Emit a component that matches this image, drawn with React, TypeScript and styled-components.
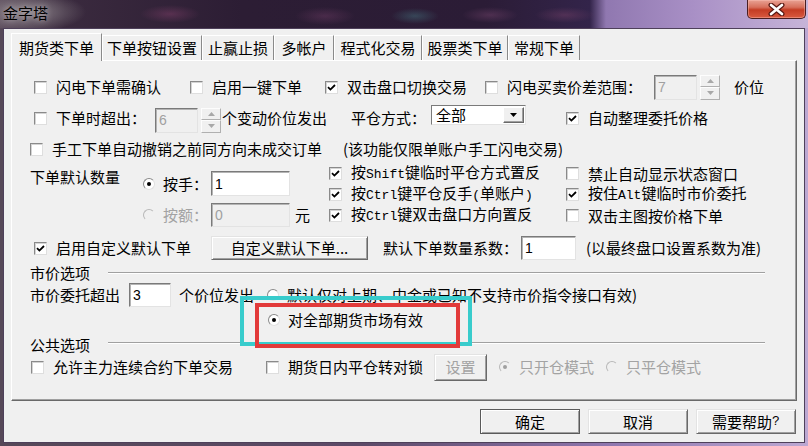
import React from "react";
import styled, { createGlobalStyle } from "styled-components";

const GlobalStyle = createGlobalStyle`
  html, body {
    margin: 0;
    padding: 0;
    background: #f0f0f0;
  }
  body {
    font-family: "Noto Sans CJK SC", "Liberation Sans", sans-serif;
    font-size: 15px;
    line-height: 20px;
    color: #000;
  }
`;

const Window = styled.div`
  position: relative;
  width: 808px;
  height: 446px;
  display: flex;
  flex-direction: column;
  overflow: hidden;
  background: linear-gradient(90deg, #564858 0%, #5d4a68 45%, #8f76ae 75%, #bca8d2 100%);
`;

const TitleBar = styled.div`
  flex: none;
  height: 28px;
  display: flex;
  align-items: flex-start;
  justify-content: space-between;
  background:
    radial-gradient(ellipse 60px 20px at 26px 12px, rgba(140, 132, 138, 0.95), rgba(140, 132, 138, 0) 100%),
    radial-gradient(ellipse 30px 9px at 170px 14px, rgba(120, 60, 100, 0.55), rgba(120, 60, 100, 0) 100%),
    radial-gradient(ellipse 30px 9px at 325px 16px, rgba(110, 60, 100, 0.45), rgba(110, 60, 100, 0) 100%),
    radial-gradient(ellipse 24px 8px at 415px 16px, rgba(70, 120, 130, 0.45), rgba(70, 120, 130, 0) 100%),
    radial-gradient(ellipse 28px 8px at 490px 15px, rgba(120, 70, 110, 0.45), rgba(120, 70, 110, 0) 100%),
    radial-gradient(ellipse 30px 8px at 565px 15px, rgba(130, 70, 110, 0.4), rgba(130, 70, 110, 0) 100%),
    linear-gradient(90deg, #5c4c5c 0%, #3a2a3e 8%, #2c1d34 30%, #2b1c36 60%, #33244a 73%, #9078b0 75%, #a990c6 86%, #c6b4d8 100%);
`;

const Title = styled.div`
  padding: 4px 0 0 3px;
  font-size: 15px;
  line-height: 18px;
  color: #000;
  text-shadow: 0 0 6px rgba(230, 225, 230, 0.7);
`;

const CloseButton = styled.div`
  width: 59px;
  height: 19px;
  margin-right: 2px;
  box-sizing: border-box;
  border: 1px solid #4a1e22;
  border-top: none;
  border-radius: 0 0 5px 5px;
  display: flex;
  align-items: center;
  justify-content: center;
  background: linear-gradient(180deg, #e9a294 0%, #d7705c 40%, #c43c24 55%, #d85a40 100%);
  box-shadow: inset 0 0 0 1px rgba(255, 200, 190, 0.4);
`;

const Client = styled.div`
  flex: 1;
  margin: 0 3px 3px;
  border: 1px solid #4e405a;
  background: #f0f0f0;
  padding: 4px 7px 0;
  display: flex;
  flex-direction: column;
`;

const TabStrip = styled.div`
  position: relative;
  z-index: 1;
  height: 27px;
  display: flex;
  align-items: flex-end;
`;

const Tab = styled.div<{ $w: number; $active?: boolean }>`
  flex: none;
  width: ${(p) => p.$w}px;
  height: ${(p) => (p.$active ? 28 : 25)}px;
  margin-bottom: ${(p) => (p.$active ? -1 : 0)}px;
  box-sizing: border-box;
  display: flex;
  align-items: center;
  justify-content: center;
  background: #f0f0f0;
  border: 1px solid;
  border-bottom: none;
  border-color: #ffffff #8a8a8a transparent #ffffff;
  white-space: nowrap;
`;

const Panel = styled.div`
  position: relative;
  flex: none;
  height: 341px;
  box-sizing: border-box;
  border: 1px solid;
  border-color: #ffffff #696969 #696969 #ffffff;
  box-shadow: inset -1px -1px 0 #a0a0a0;
  padding-top: 11px;
  display: flex;
  flex-direction: column;
`;

const Row = styled.div<{ $h: number; $pl: number }>`
  flex: none;
  height: ${(p) => p.$h}px;
  padding-left: ${(p) => p.$pl}px;
  display: flex;
  align-items: center;
  white-space: nowrap;
`;

const Block = styled.div`
  flex: none;
  height: 70px;
  padding-left: 18px;
  display: flex;
  align-items: flex-start;
  white-space: nowrap;
`;

const Cell = styled.div<{ $w: number; $ml?: number }>`
  flex: none;
  width: ${(p) => p.$w}px;
  margin-left: ${(p) => p.$ml || 0}px;
  display: flex;
  align-items: center;
`;

const Text = styled.span<{ $ml?: number; $disabled?: boolean }>`
  margin-left: ${(p) => p.$ml || 0}px;
  color: ${(p) => (p.$disabled ? "#a3a3a3" : "#000")};
`;

const QtyLabel = styled.div`
  flex: none;
  width: 113px;
  margin-top: 3px;
`;

const RadioCol = styled.div`
  flex: none;
  width: 186px;
  padding-top: 7px;
  display: flex;
  flex-direction: column;
  gap: 6px;
`;

const SubRow = styled.div`
  height: 25px;
  display: flex;
  align-items: center;
`;

const CheckCol = styled.div<{ $w?: number }>`
  flex: none;
  width: ${(p) => (p.$w ? `${p.$w}px` : "auto")};
  margin-top: -1px;
  display: flex;
  flex-direction: column;
`;

const CheckLine = styled.div`
  height: 21px;
  display: flex;
  align-items: center;
`;

const Mono = styled.span`
  font-family: "Liberation Mono", "DejaVu Sans Mono", monospace;
  font-size: 13px;
`;

const ChoiceLabel = styled.span<{ $gap: number; $disabled?: boolean }>`
  display: inline-flex;
  align-items: center;
  gap: ${(p) => p.$gap}px;
  color: ${(p) => (p.$disabled ? "#a3a3a3" : "#000")};
`;

const Box = styled.span`
  flex: none;
  width: 13px;
  height: 13px;
  box-sizing: border-box;
  background: #fff;
  border: 1px solid;
  border-color: #8a8a8a #dedede #dedede #8a8a8a;
  box-shadow: inset 1px 1px 0 #d4d4d4;
  display: flex;
  align-items: center;
  justify-content: center;
`;

const Round = styled.span<{ $on?: boolean; $disabled?: boolean }>`
  flex: none;
  width: 12px;
  height: 12px;
  box-sizing: border-box;
  border-radius: 50%;
  background: ${(p) => (p.$disabled ? "#f0f0f0" : "#fff")};
  border: 1px solid;
  border-color: ${(p) => (p.$disabled ? "#b8b8b8 #f0f0f0 #f0f0f0 #b8b8b8" : "#8a8a8a #e0e0e0 #e0e0e0 #8a8a8a")};
  display: flex;
  align-items: center;
  justify-content: center;

  &::after {
    content: "";
    display: ${(p) => (p.$on ? "block" : "none")};
    width: 4px;
    height: 4px;
    border-radius: 50%;
    background: ${(p) => (p.$disabled ? "#a0a0a0" : "#000")};
  }
`;

const Field = styled.div<{ $w: number; $h?: number; $disabled?: boolean }>`
  flex: none;
  width: ${(p) => p.$w}px;
  height: ${(p) => p.$h || 24}px;
  box-sizing: border-box;
  padding-left: 3px;
  display: flex;
  align-items: center;
  background: ${(p) => (p.$disabled ? "#f0f0f0" : "#fff")};
  color: ${(p) => (p.$disabled ? "#a0a0a0" : "#000")};
  border: 1px solid;
  border-color: #7a7a7a #e3e3e3 #e3e3e3 #7a7a7a;
  box-shadow: inset 1px 1px 0 #b4b4b4;
  font-family: "Liberation Sans", sans-serif;
  font-size: 14px;
`;

const SpinBox = styled.div<{ $mt?: number }>`
  flex: none;
  display: flex;
  align-items: center;
  gap: 3px;
  margin-top: ${(p) => p.$mt || 0}px;
`;

const SpinButtons = styled.div`
  width: 20px;
  height: 25px;
  display: flex;
  flex-direction: column;
`;

const SpinHalf = styled.div`
  flex: 1;
  box-sizing: border-box;
  border: 1px solid;
  border-color: #fdfdfd #b0b0b0 #b0b0b0 #fdfdfd;
  background: #f0f0f0;
  display: flex;
  align-items: center;
  justify-content: center;
`;

const Combo = styled.div`
  flex: none;
  width: 95px;
  height: 20px;
  margin-bottom: 6px;
  box-sizing: border-box;
  padding: 0 1px 0 4px;
  display: flex;
  align-items: center;
  justify-content: space-between;
  background: #fff;
  border: 1px solid;
  border-color: #7a7a7a #e3e3e3 #e3e3e3 #7a7a7a;
`;

const ComboArrow = styled.div`
  width: 21px;
  height: 16px;
  box-sizing: border-box;
  border: 1px solid;
  border-color: #fff #696969 #696969 #fff;
  box-shadow: inset -1px -1px 0 #a0a0a0;
  background: #f0f0f0;
  display: flex;
  align-items: center;
  justify-content: center;
`;

const Button = styled.div<{ $w: number; $h?: number; $ml?: number; $disabled?: boolean; $default?: boolean }>`
  flex: none;
  width: ${(p) => p.$w}px;
  height: ${(p) => p.$h || 25}px;
  margin-left: ${(p) => p.$ml || 0}px;
  box-sizing: border-box;
  display: flex;
  align-items: center;
  justify-content: center;
  background: #f0f0f0;
  color: ${(p) => (p.$disabled ? "#a3a3a3" : "#000")};
  border: 1px solid;
  border-color: ${(p) => (p.$default ? "#5a5a5a" : "#e3e3e3 #696969 #696969 #e3e3e3")};
  box-shadow: inset 1px 1px 0 #fff, inset -1px -1px 0 #a0a0a0;
`;

const GroupRow = styled.div`
  flex: none;
  height: 22px;
  padding: 0 31px 0 18px;
  display: flex;
  align-items: center;
`;

const GroupTitle = styled.span`
  flex: none;
  width: 78px;
`;

const Rule = styled.div<{ $dy?: number }>`
  flex: 1;
  height: 0;
  margin-top: ${(p) => p.$dy || 0}px;
  border-top: 1px solid #a0a0a0;
  border-bottom: 1px solid #fff;
`;

const Footer = styled.div`
  display: flex;
  justify-content: flex-end;
  gap: 8px;
  padding: 8px 1px 0 0;
`;

const Highlight = styled.div<{ $x: number; $y: number; $w: number; $h: number; $color: string }>`
  position: absolute;
  left: ${(p) => p.$x}px;
  top: ${(p) => p.$y}px;
  width: ${(p) => p.$w}px;
  height: ${(p) => p.$h}px;
  box-sizing: border-box;
  border: 4px solid ${(p) => p.$color};
  pointer-events: none;
`;

const CheckMark = () => (
  <svg width="9" height="9" viewBox="0 0 9 9">
    <path d="M1 4.2 L3.4 6.6 L8 2" fill="none" stroke="#000" strokeWidth="1.8" />
  </svg>
);

const Check = ({ on, children }: { on?: boolean; children: React.ReactNode }) => (
  <ChoiceLabel $gap={9}>
    <Box>{on && <CheckMark />}</Box>
    <span>{children}</span>
  </ChoiceLabel>
);

const Radio = ({ on, disabled, children }: { on?: boolean; disabled?: boolean; children: React.ReactNode }) => (
  <ChoiceLabel $gap={8} $disabled={disabled}>
    <Round $on={on} $disabled={disabled} />
    <span>{children}</span>
  </ChoiceLabel>
);

const Triangle = ({ up, color }: { up?: boolean; color: string }) => (
  <svg width="7" height="4" viewBox="0 0 7 4">
    <path d={up ? "M0 4 L3.5 0 L7 4 Z" : "M0 0 L7 0 L3.5 4 Z"} fill={color} />
  </svg>
);

const Spin = ({ value, mt }: { value: string; mt?: number }) => (
  <SpinBox $mt={mt}>
    <Field $w={43} $h={25} $disabled>{value}</Field>
    <SpinButtons>
      <SpinHalf><Triangle up color="#a8a8a8" /></SpinHalf>
      <SpinHalf><Triangle color="#a8a8a8" /></SpinHalf>
    </SpinButtons>
  </SpinBox>
);

const tabs = [
  { label: "期货类下单", w: 91 },
  { label: "下单按钮设置", w: 100 },
  { label: "止赢止损", w: 72 },
  { label: "多帐户", w: 60 },
  { label: "程式化交易", w: 88 },
  { label: "股票类下单", w: 86 },
  { label: "常规下单", w: 72 },
];

export default function App() {
  return (
    <>
      <GlobalStyle />
      <Window>
        <TitleBar>
          <Title>金字塔</Title>
          <CloseButton>
            <svg width="17" height="13" viewBox="0 0 17 13">
              <path d="M3 2 L14 11 M14 2 L3 11" stroke="#5a1a14" strokeWidth="5" strokeLinecap="round" />
              <path d="M3 2 L14 11 M14 2 L3 11" stroke="#ffffff" strokeWidth="2.6" strokeLinecap="round" />
            </svg>
          </CloseButton>
        </TitleBar>

        <Client>
          <TabStrip>
            {tabs.map((t, i) => (
              <Tab key={t.label} $w={t.w} $active={i === 0}>
                {t.label}
              </Tab>
            ))}
          </TabStrip>

          <Panel>
            <Row $h={30} $pl={22}>
              <Cell $w={156}><Check>闪电下单需确认</Check></Cell>
              <Cell $w={135}><Check>启用一键下单</Check></Cell>
              <Cell $w={160}><Check on>双击盘口切换交易</Check></Cell>
              <Cell $w={169}><Check>闪电买卖价差范围：</Check></Cell>
              <Spin value="7" />
              <Text $ml={14}>价位</Text>
            </Row>

            <Row $h={32} $pl={22}>
              <Cell $w={121}><Check>下单时超出：</Check></Cell>
              <Spin value="6" mt={4} />
              <Cell $w={129} $ml={1}>个变动价位发出</Cell>
              <Cell $w={80}>平仓方式：</Cell>
              <Combo>
                <span>全部</span>
                <ComboArrow><Triangle color="#000" /></ComboArrow>
              </Combo>
              <Cell $w={160} $ml={40}><Check on>自动整理委托价格</Check></Cell>
            </Row>

            <Row $h={30} $pl={18}>
              <Cell $w={313}><Check>手工下单自动撤销之前同方向未成交订单</Check></Cell>
              <Text>(该功能仅限单账户手工闪电交易)</Text>
            </Row>

            <Block>
              <QtyLabel>下单默认数量</QtyLabel>
              <RadioCol>
                <SubRow>
                  <Cell $w={68}><Radio on>按手：</Radio></Cell>
                  <Field $w={79} $h={25}>1</Field>
                </SubRow>
                <SubRow>
                  <Cell $w={68}><Radio disabled>按额：</Radio></Cell>
                  <Field $w={79} $h={24} $disabled>0</Field>
                  <Text $ml={5}>元</Text>
                </SubRow>
              </RadioCol>
              <CheckCol $w={237}>
                <CheckLine><Check on>按<Mono>Shift</Mono>键临时平仓方式置反</Check></CheckLine>
                <CheckLine><Check on>按<Mono>Ctrl</Mono>键平仓反手<Mono>(</Mono>单账户<Mono>)</Mono></Check></CheckLine>
                <CheckLine><Check on>按<Mono>Ctrl</Mono>键双击盘口方向置反</Check></CheckLine>
              </CheckCol>
              <CheckCol>
                <CheckLine><Check>禁止自动显示状态窗口</Check></CheckLine>
                <CheckLine><Check on>按住<Mono>Alt</Mono>键临时市价委托</Check></CheckLine>
                <CheckLine><Check>双击主图按价格下单</Check></CheckLine>
              </CheckCol>
            </Block>

            <Row $h={28} $pl={22}>
              <Cell $w={177}><Check on>启用自定义默认下单</Check></Cell>
              <Button $w={157} $h={24}>自定义默认下单...</Button>
              <Cell $w={138} $ml={15}>默认下单数量系数：</Cell>
              <Field $w={55}>1</Field>
              <Text $ml={10}>(以最终盘口设置系数为准)</Text>
            </Row>

            <GroupRow>
              <GroupTitle>市价选项</GroupTitle>
              <Rule $dy={-1} />
            </GroupRow>

            <Row $h={22} $pl={18}>
              <Cell $w={99}>市价委托超出</Cell>
              <Field $w={42}>3</Field>
              <Cell $w={88} $ml={8}>个价位发出</Cell>
              <Radio>默认仅对上期、中金或已知不支持市价指令接口有效)</Radio>
            </Row>

            <Row $h={28} $pl={256}>
              <Radio on>对全部期货市场有效</Radio>
            </Row>

            <GroupRow>
              <GroupTitle>公共选项</GroupTitle>
              <Rule $dy={-4} />
            </GroupRow>

            <Row $h={22} $pl={19}>
              <Cell $w={235}><Check>允许主力连续合约下单交易</Check></Cell>
              <Cell $w={168}><Check>期货日内平仓转对锁</Check></Cell>
              <Button $w={53} $h={27} $disabled>设置</Button>
              <Cell $w={107} $ml={12}><Radio on disabled>只开仓模式</Radio></Cell>
              <Radio disabled>只平仓模式</Radio>
            </Row>
          </Panel>

          <Footer>
            <Button $w={100} $default>确定</Button>
            <Button $w={100}>取消</Button>
            <Button $w={100}>需要帮助<Mono>?</Mono></Button>
          </Footer>
        </Client>

        <Highlight $x={240} $y={296} $w={232} $h={50} $color="#38cccc" />
        <Highlight $x={255} $y={303} $w={205} $h={45} $color="#e23a3a" />
      </Window>
    </>
  );
}
